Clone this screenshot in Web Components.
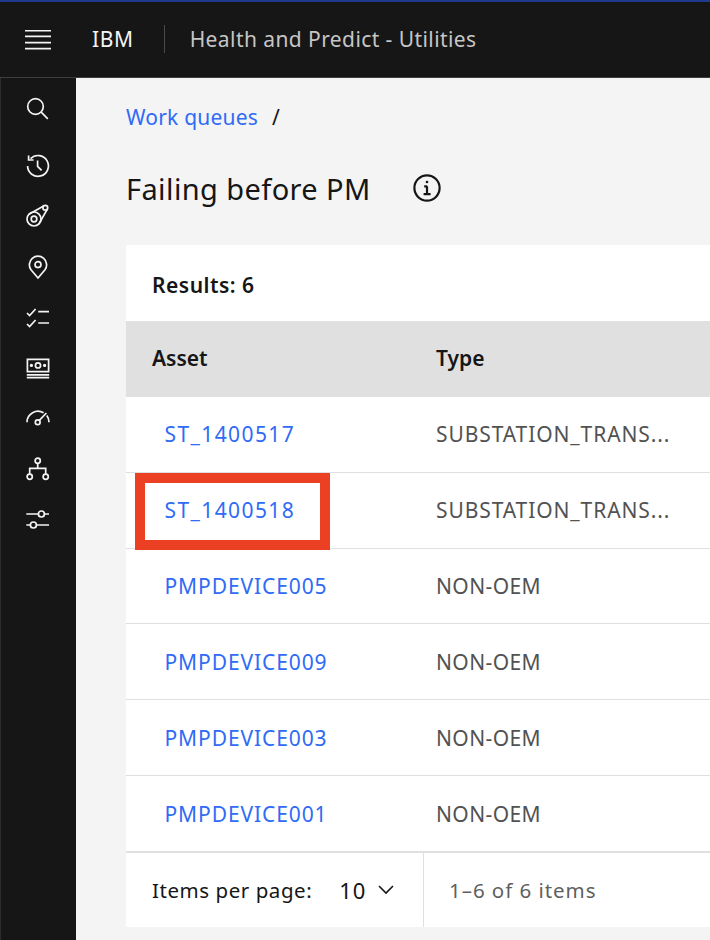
<!DOCTYPE html>
<html lang="en">
<head>
<meta charset="utf-8">
<title>Failing before PM</title>
<style>
  html, body { margin: 0; height: 100%; }
  body {
    width: 710px;
    height: 940px;
    overflow: hidden;
    background: #f4f4f4;
    color: #161616;
    font-family: "Noto Sans", "Liberation Sans", sans-serif;
    display: grid;
    grid-template-columns: 76px 1fr;
    grid-template-rows: 78px 1fr;
  }
  app-header { grid-column: 1 / 3; }
</style>
</head>
<body>
  <app-header>Health and Predict - Utilities</app-header>
  <side-nav></side-nav>
  <work-page>
    <bread-crumb>Work queues</bread-crumb>
    <page-title>Failing before PM</page-title>
    <results-card>
      <queue-row asset="ST_1400517" type="SUBSTATION_TRANS..." style="--asset-ls: 1.4px; --type-ls: .9px"></queue-row>
      <queue-row asset="ST_1400518" type="SUBSTATION_TRANS..." style="--asset-ls: 1.4px; --type-ls: .9px" marked></queue-row>
      <queue-row asset="PMPDEVICE005" type="NON-OEM"></queue-row>
      <queue-row asset="PMPDEVICE009" type="NON-OEM"></queue-row>
      <queue-row asset="PMPDEVICE003" type="NON-OEM"></queue-row>
      <queue-row asset="PMPDEVICE001" type="NON-OEM"></queue-row>
    </results-card>
  </work-page>

<script>
  class Base extends HTMLElement {
    constructor (html) {
      super()
      this.shadow = this.attachShadow({mode: 'open'})
      this.shadow.innerHTML = html
    }
  }

  customElements.define('app-header', class extends Base {
    constructor () {
      super(`
        <style>
          :host {
            display: flex;
            align-items: center;
            background: #161616;
            border-top: 2px solid #1f3a8f;
            border-bottom: 1px solid #3d3d3d;
            box-sizing: border-box;
            height: 78px;
            padding-bottom: 1px;
            color: #f4f4f4;
            font-size: 21px;
          }
          .menu { width: 76px; display: flex; justify-content: center; flex: none; }
          .brand { margin-left: 16px; letter-spacing: 0.6px; padding-right: 30px; }
          .name {
            color: #c6c6c6;
            border-left: 1px solid #4a4a4a;
            padding-left: 25px;
            height: 28px;
            line-height: 28px;
            letter-spacing: 0.42px;
          }
        </style>
        <div class="menu">
          <svg width="26" height="21" viewBox="0 0 26 21" stroke="#f4f4f4" stroke-width="1.6" fill="none">
            <path d="M0 1.8h26M0 7.4h26M0 13.6h26M0 19.6h26"/>
          </svg>
        </div>
        <span class="brand">IBM</span>
        <span class="name"><slot></slot></span>
      `)
    }
  })

  const NAV_ICONS = [
    // search
    '<circle cx="9.5" cy="9.5" r="7.8"/><path d="M15.2 15.2l6.6 6.6"/>',
    // history
    '<path d="M4.6 4.6A10.4 10.4 0 1 1 1.6 12"/><path d="M2.6 1.4v4.6h5"/><path d="M11.6 6.4v6l4 4"/>',
    // belt
    '<circle cx="8" cy="15" r="7"/><circle cx="8" cy="15" r="2.8"/><circle cx="19.3" cy="3.7" r="2.4"/><path d="M3 10.2L17.6 1.9M12.8 20.2L21.4 5"/>',
    // pin
    '<g transform="translate(0 .6)"><path d="M12 22.4L5 14.2A8.6 8.6 0 1 1 19 14.2z"/><circle cx="12" cy="9" r="3"/></g>',
    // checklist
    '<g transform="translate(0 -1)"><path d="M1 8l2.6 2.6 6-6.6M1 19l2.6 2.6 6-6.6"/><path d="M12.2 6.7h10.8M12.2 18h10.8"/></g>',
    // money
    '<path d="M1.4 3.4h21.2v12.2H1.4z"/><circle cx="12" cy="9.4" r="2.6"/><path d="M0.8 18.8h22.4M0.8 21.6h22.4"/><circle cx="5.4" cy="9.4" r=".8"/><circle cx="18.6" cy="9.4" r=".8"/>',
    // gauge
    '<g transform="translate(0 -1.8)"><path d="M1 17A11 11 0 0 1 17.6 7.6"/><path d="M20.8 10.4A11 11 0 0 1 23 17"/><circle cx="11.7" cy="17" r="2.4"/><path d="M13.3 15.2L20.4 7.8"/></g>',
    // tree
    '<circle cx="11.7" cy="3.7" r="2.6"/><circle cx="3.7" cy="19.7" r="2.6"/><circle cx="19.7" cy="19.7" r="2.6"/><path d="M11.7 6.3v5M3.7 17.1v-5.8h16v5.8"/>',
    // sliders
    '<path d="M.3 6h12M18.5 6h4.5M.3 17h4M10.4 17h12.6"/><circle cx="15.4" cy="6" r="3"/><circle cx="7.4" cy="17" r="3"/>'
  ]
  customElements.define('side-nav', class extends Base {
    constructor () {
      super(`
        <style>
          :host {
            display: flex;
            flex-direction: column;
            background: #161616;
            border-left: 1px solid #2c2c2c;
            box-sizing: border-box;
            padding-top: 6px;
          }
          .item { height: 50.6px; display: flex; align-items: center; justify-content: center; flex: none; padding-right: 1px; }
          .item:first-of-type { margin-bottom: 6px; }
          svg { width: 24px; height: 24px; fill: none; stroke: #f4f4f4; stroke-width: 1.7; }
        </style>
        ${NAV_ICONS.map(i => `<div class="item"><svg viewBox="0 0 24 24">${i}</svg></div>`).join('')}
      `)
    }
  })

  customElements.define('work-page', class extends Base {
    constructor () {
      super(`
        <style>
          :host { display: flex; flex-direction: column; padding: 24px 0 0 50px; min-width: 0; }
        </style>
        <slot></slot>
      `)
    }
  })

  customElements.define('bread-crumb', class extends Base {
    constructor () {
      super(`
        <style>
          :host { display: flex; gap: 14px; font-size: 21px; line-height: 30px; letter-spacing: 0.2px; }
          a { color: #2f6bf5; }
        </style>
        <a><slot></slot></a><span>/</span>
      `)
    }
  })

  customElements.define('page-title', class extends Base {
    constructor () {
      super(`
        <style>
          :host { display: flex; align-items: center; margin-top: 36px; height: 40px; font-size: 29px; letter-spacing: 0.4px; }
          svg { margin-left: 41px; width: 30px; height: 30px; fill: none; stroke: #161616; }
        </style>
        <span><slot></slot></span>
        <svg viewBox="0 0 30 30" stroke-width="2.2">
          <circle cx="15" cy="15" r="12.6"/>
          <path d="M15 13.2v8M11.6 21.2h7M12.2 13.4h3" />
          <circle cx="15" cy="9" r="1.3" fill="#161616" stroke="none"/>
        </svg>
      `)
    }
  })

  customElements.define('results-card', class extends Base {
    constructor () {
      super(`
        <style>
          :host { display: block; margin-top: 37px; background: #fff; }
          .results { height: 76px; box-sizing: border-box; padding: 3px 0 0 26px; display: flex; align-items: center; font-size: 21px; font-weight: 600; letter-spacing: .5px; }
          .head {
            height: 76px;
            box-sizing: border-box;
            padding: 0 0 2px 26px;
            background: #e0e0e0;
            display: grid;
            grid-template-columns: 284px 1fr;
            align-items: center;
            font-size: 21px;
            font-weight: 600;
          }
          .pager {
            height: 76px;
            box-sizing: border-box;
            border-top: 2px solid #e0e0e0;
            margin-top: -1px;
            display: flex;
            align-items: stretch;
            font-size: 20.5px;
          }
          .per { display: flex; align-items: center; width: 298px; box-sizing: border-box; padding-left: 26px; border-right: 1px solid #e0e0e0; flex: none; letter-spacing: .55px; }
          .val { margin-left: 27px; font-size: 22px; letter-spacing: 1px; }
          .per svg { margin-left: 10px; width: 20px; height: 12px; fill: none; stroke: #161616; stroke-width: 1.6; }
          .count { display: flex; align-items: center; padding-left: 25px; color: #5f5f5f; letter-spacing: .95px; }
        </style>
        <div class="results">Results: 6</div>
        <div class="head"><span>Asset</span><span>Type</span></div>
        <slot></slot>
        <div class="pager">
          <div class="per">
            <span>Items per page:</span><span class="val">10</span>
            <svg viewBox="0 0 20 12"><path d="M3 2l7 7 7-7"/></svg>
          </div>
          <div class="count">1–6 of 6 items</div>
        </div>
      `)
    }
  })

  customElements.define('queue-row', class extends Base {
    constructor () {
      super(`
        <style>
          :host {
            display: grid;
            grid-template-columns: 284px 1fr;
            align-items: center;
            position: relative;
            height: 75.8px;
            box-sizing: border-box;
            border-bottom: 1px solid #e0e0e0;
            padding-left: 26px;
            font-size: 21px;
          }
          :host(:last-of-type) { border-bottom: 0; }
          a { color: #2f6bf5; padding-left: 12.5px; letter-spacing: var(--asset-ls, .9px); }
          .type { color: #525252; letter-spacing: var(--type-ls, .4px); }
          .mark {
            position: absolute;
            left: 9px;
            top: 0;
            width: 195px;
            height: 77px;
            box-sizing: border-box;
            border: 10px solid #ec4024;
          }
        </style>
        <a></a><span class="type"></span>
      `)
    }
    connectedCallback () {
      this.shadow.querySelector('a').textContent = this.getAttribute('asset')
      this.shadow.querySelector('.type').textContent = this.getAttribute('type')
      if (this.hasAttribute('marked')) {
        const box = document.createElement('div')
        box.className = 'mark'
        this.shadow.appendChild(box)
      }
    }
  })
</script>
</body>
</html>
